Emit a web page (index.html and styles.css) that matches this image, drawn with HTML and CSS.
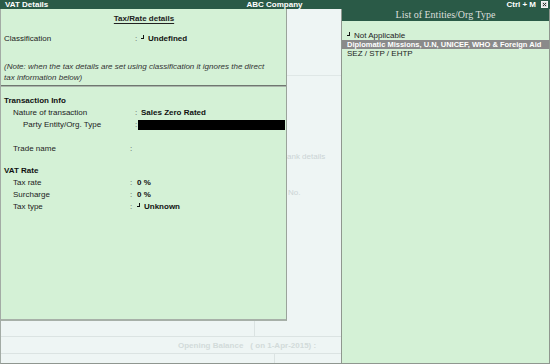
FILE: index.html
```html
<!DOCTYPE html>
<html lang="en">
<head>
  <meta charset="UTF-8">
  <title>VAT Details</title>
  <link rel="stylesheet" href="styles.css">
</head>
<body>
<div class="window">
  <div class="titlebar">
    <span class="tb-left">VAT Details</span>
    <span class="tb-center">ABC Company</span>
    <span class="tb-right">Ctrl + M
      <svg class="close" width="7" height="7" viewBox="0 0 7 7">
        <rect x="0.5" y="0.5" width="6" height="6" fill="#d9dedb" stroke="#f4f4f4"/>
        <path d="M2 2 L5 5 M5 2 L2 5" stroke="#333" stroke-width="1"/>
      </svg>
    </span>
  </div>

  <div class="workspace">
    <div class="form-area">
      <div class="upper">
        <div class="tax-panel">
          <div class="heading"><span>Tax/Rate details</span></div>

          <div class="row row-class indent-0">
            <span class="key">Classification</span>
            <span class="sep">:</span>
            <span class="val"><i class="mark"></i>Undefined</span>
          </div>

          <p class="note">(Note: when the tax details are set using classification it ignores the direct<br>tax information below)</p>

          <div class="divider"></div>

          <div class="section">Transaction Info</div>
          <div class="row indent-1">
            <span class="key">Nature of transaction</span>
            <span class="sep">:</span>
            <span class="val">Sales Zero Rated</span>
          </div>
          <div class="row indent-2">
            <span class="key">Party Entity/Org. Type</span>
            <span class="sep sep-tight">:</span>
            <span class="input-box"></span>
          </div>
          <div class="row row-trade indent-1">
            <span class="key narrow">Trade name</span>
            <span class="sep">:</span>
          </div>

          <div class="section section-vat">VAT Rate</div>
          <div class="row indent-1">
            <span class="key narrow">Tax rate</span>
            <span class="sep sep-wide">:</span>
            <span class="val">0 %</span>
          </div>
          <div class="row indent-1">
            <span class="key narrow">Surcharge</span>
            <span class="sep sep-wide">:</span>
            <span class="val">0 %</span>
          </div>
          <div class="row indent-1">
            <span class="key narrow">Tax type</span>
            <span class="sep sep-wide">:</span>
            <span class="val"><i class="mark"></i>Unknown</span>
          </div>
        </div>

        <div class="gutter">
          <div class="gutter-line"></div>
          <div class="ghost ghost-bank">ank details</div>
          <div class="ghost ghost-no">No.</div>
        </div>
      </div>

      <div class="strip strip-1"><div class="cell cell-1"></div></div>
      <div class="strip strip-2"><span>Opening Balance</span><span class="ob-date">( on 1-Apr-2015) :</span></div>
      <div class="strip strip-3"><div class="cell cell-3"></div></div>
    </div>

    <div class="list-panel">
      <div class="list-title">List of Entities/Org Type</div>
      <ul class="list">
        <li><i class="mark"></i>Not Applicable</li>
        <li class="selected">Diplomatic Missions, U.N, UNICEF, WHO &amp; Foreign Aid</li>
        <li>SEZ / STP / EHTP</li>
      </ul>
    </div>
  </div>
</div>
</body>
</html>
```

FILE: styles.css
```css
* {
  box-sizing: border-box;
}
body {
  margin: 0;
  font-family: "Liberation Sans", Arial, sans-serif;
  font-size: 8px;
  color: #222;
  background-color: #eef5f4;
  overflow: hidden;
}
.window {
  width: 550px;
  height: 364px;
  display: flex;
  flex-direction: column;
}

/* title bar */
.titlebar {
  height: 9px;
  background-color: #2a5a47;
  color: #fff;
  font-weight: bold;
  line-height: 9px;
  display: grid;
  grid-template-columns: 1fr auto 1fr;
  padding: 0 2px 0 5px;
}
.tb-center {
  padding-right: 4px;
}
.tb-right {
  display: flex;
  justify-content: flex-end;
  align-items: center;
}
.close {
  margin-left: 5px;
}

.workspace {
  flex: 1;
  display: flex;
}
.form-area {
  width: 341px;
  display: flex;
  flex-direction: column;
  border-left: 1px solid #a3aba5;
  border-bottom: 1px solid #8f9690;
}
.upper {
  height: 312px;
  display: flex;
}

/* tax/rate panel */
.tax-panel {
  width: 286px;
  background-color: #d4f1d6;
  border-right: 1px solid #9aa39b;
  border-bottom: 2px solid #a7b0a8;
  padding-top: 4px;
}
.heading {
  text-align: center;
  font-weight: bold;
  height: 12px;
  line-height: 12px;
  padding-left: 1px;
}
.heading span {
  text-decoration: underline;
  text-underline-offset: 2px;
}
.row {
  display: flex;
  align-items: center;
  height: 12px;
  line-height: 12px;
  white-space: nowrap;
}
.indent-0 { padding-left: 3px; }
.indent-1 { padding-left: 12px; }
.indent-2 { padding-left: 22px; }
.key {
  width: 135px;
  flex: none;
}
.indent-0 .key { width: 131px; }
.indent-1 .key { width: 122px; }
.indent-2 .key { width: 112px; }
.indent-1 .key.narrow { width: 117px; }
.sep {
  width: 6px;
  flex: none;
  color: #555;
}
.sep-tight { width: 3px; }
.sep-wide { width: 7px; }
.val {
  font-weight: bold;
  color: #111;
  display: flex;
  align-items: center;
}
.mark {
  display: inline-block;
  width: 3px;
  height: 4px;
  border-right: 1px solid #111;
  border-bottom: 1px solid #111;
  margin-right: 4px;
  margin-top: -4px;
}
.row-class {
  margin-top: 8px;
}
.note {
  margin: 16px 0 0;
  padding-left: 3px;
  font-style: italic;
  line-height: 11px;
  color: #333;
}
.divider {
  margin-top: 2px;
  height: 2px;
  border-top: 1px solid #6f7770;
  border-bottom: 1px solid #aab6ab;
}
.section {
  margin-top: 8px;
  padding-left: 3px;
  height: 12px;
  line-height: 12px;
  font-weight: bold;
  color: #111;
}
.section-vat {
  margin-top: 10px;
}
.input-box {
  width: 147px;
  height: 10px;
  background-color: #000;
}
.row-trade {
  margin-top: 12px;
}

/* gutter between panels */
.gutter {
  flex: 1;
  overflow: hidden;
  white-space: nowrap;
}
.gutter-line {
  margin-top: 66px;
  border-top: 1px solid #dfe7e6;
}
.ghost {
  color: #cbd4d4;
  height: 12px;
  line-height: 12px;
}
.ghost-bank {
  margin-top: 75px;
}
.ghost-no {
  margin-top: 24px;
  padding-left: 1px;
}

/* faint rows under panel */
.strip {
  display: flex;
  border-bottom: 1px solid #dbe3e2;
}
.strip-1 { height: 16px; }
.strip-2 {
  height: 17px;
  align-items: center;
  padding-left: 177px;
  font-weight: bold;
  color: #d2dbda;
}
.ob-date {
  margin-left: 7px;
}
.strip-3 {
  height: 9px;
  border-bottom: none;
}
.cell {
  border-right: 1px solid #dbe3e2;
}
.cell-1 { width: 254px; }
.cell-3 { width: 274px; }

/* list of entities */
.list-panel {
  width: 209px;
  background-color: #d4f1d6;
  border-left: 1px solid #8f978f;
  border-right: 1px solid #8f978f;
  border-bottom: 1px solid #8f978f;
}
.list-title {
  height: 12px;
  line-height: 12px;
  background-color: #2a5a47;
  color: #dcdfdc;
  font-family: "Liberation Serif", "Times New Roman", serif;
  font-size: 10px;
  text-align: center;
}
.list {
  list-style: none;
  margin: 0;
  padding: 10px 0 0;
}
.list li {
  height: 9px;
  line-height: 9px;
  padding-left: 5px;
  white-space: nowrap;
  overflow: hidden;
  display: flex;
  align-items: center;
}
.list li.selected {
  background-color: #8a8a8a;
  color: #fff;
  font-weight: bold;
  font-size: 7.5px;
}
```
